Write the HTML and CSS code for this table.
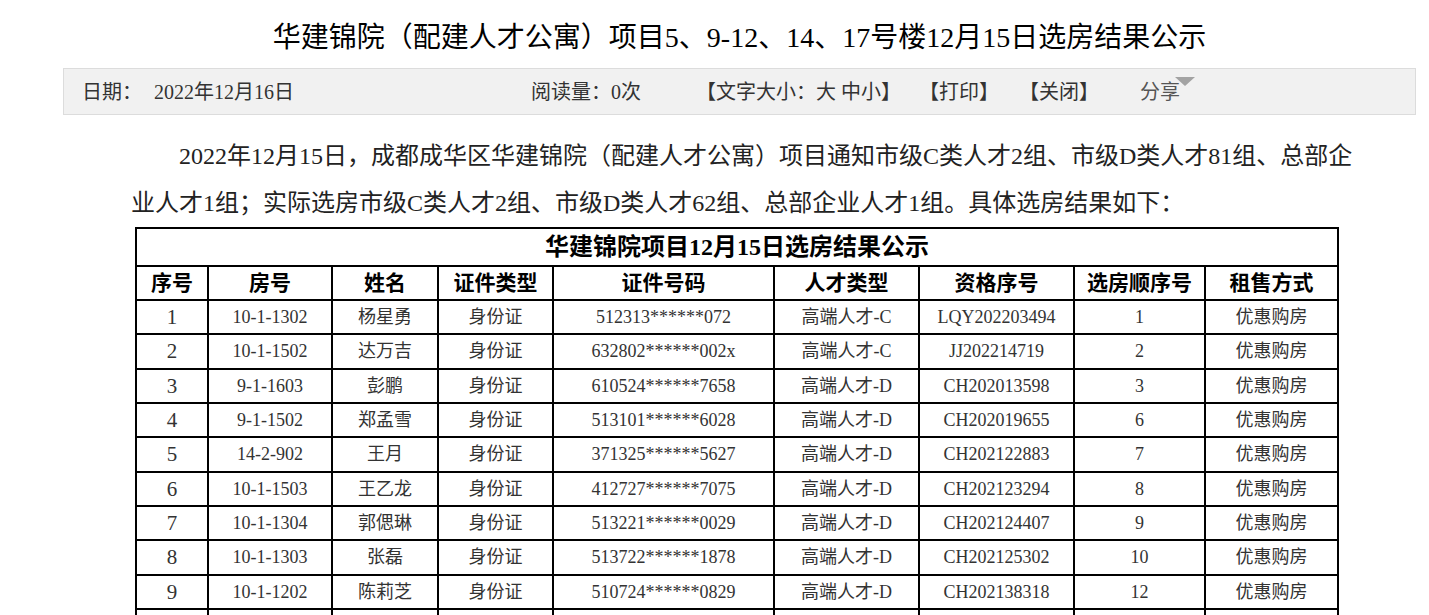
FILE: index.html
```html
<!DOCTYPE html>
<html lang="zh-CN">
<head>
<meta charset="utf-8">
<title>华建锦院（配建人才公寓）项目5、9-12、14、17号楼12月15日选房结果公示</title>
<link rel="stylesheet" href="styles.css">
</head>
<body>
<div class="page">
  <h1 class="title">华建锦院（配建人才公寓）项目5、9-12、14、17号楼12月15日选房结果公示</h1>
  <div class="infobar">
    <span class="lbl-date">日期：</span>
    <span class="val-date">2022年12月16日</span>
    <span class="reads">阅读量：0次</span>
    <span class="fontsize">【文字大小：大 中小】</span>
    <span class="print">【打印】</span>
    <span class="close">【关闭】</span>
    <span class="share">分享<i class="caret"></i></span>
  </div>
  <div class="article">
    <p class="intro">2022年12月15日，成都成华区华建锦院（配建人才公寓）项目通知市级C类人才2组、市级D类人才81组、总部企业人才1组；实际选房市级C类人才2组、市级D类人才62组、总部企业人才1组。具体选房结果如下：</p>
    <table class="result">
      <colgroup>
        <col class="c1"><col class="c2"><col class="c3"><col class="c4"><col class="c5"><col class="c6"><col class="c7"><col class="c8"><col class="c9">
      </colgroup>
      <tr class="caption-row"><td colspan="9">华建锦院项目12月15日选房结果公示</td></tr>
      <tr class="head-row">
        <th>序号</th><th>房号</th><th>姓名</th><th>证件类型</th><th>证件号码</th><th>人才类型</th><th>资格序号</th><th>选房顺序号</th><th>租售方式</th>
      </tr>
      <tr><td class="num">1</td><td>10-1-1302</td><td>杨星勇</td><td>身份证</td><td>512313******072</td><td>高端人才-C</td><td>LQY202203494</td><td>1</td><td>优惠购房</td></tr>
      <tr><td class="num">2</td><td>10-1-1502</td><td>达万吉</td><td>身份证</td><td>632802******002x</td><td>高端人才-C</td><td>JJ202214719</td><td>2</td><td>优惠购房</td></tr>
      <tr><td class="num">3</td><td>9-1-1603</td><td>彭鹏</td><td>身份证</td><td>610524******7658</td><td>高端人才-D</td><td>CH202013598</td><td>3</td><td>优惠购房</td></tr>
      <tr><td class="num">4</td><td>9-1-1502</td><td>郑孟雪</td><td>身份证</td><td>513101******6028</td><td>高端人才-D</td><td>CH202019655</td><td>6</td><td>优惠购房</td></tr>
      <tr><td class="num">5</td><td>14-2-902</td><td>王月</td><td>身份证</td><td>371325******5627</td><td>高端人才-D</td><td>CH202122883</td><td>7</td><td>优惠购房</td></tr>
      <tr><td class="num">6</td><td>10-1-1503</td><td>王乙龙</td><td>身份证</td><td>412727******7075</td><td>高端人才-D</td><td>CH202123294</td><td>8</td><td>优惠购房</td></tr>
      <tr><td class="num">7</td><td>10-1-1304</td><td>郭偲琳</td><td>身份证</td><td>513221******0029</td><td>高端人才-D</td><td>CH202124407</td><td>9</td><td>优惠购房</td></tr>
      <tr><td class="num">8</td><td>10-1-1303</td><td>张磊</td><td>身份证</td><td>513722******1878</td><td>高端人才-D</td><td>CH202125302</td><td>10</td><td>优惠购房</td></tr>
      <tr><td class="num">9</td><td>10-1-1202</td><td>陈莉芝</td><td>身份证</td><td>510724******0829</td><td>高端人才-D</td><td>CH202138318</td><td>12</td><td>优惠购房</td></tr>
      <tr><td></td><td></td><td></td><td></td><td></td><td></td><td></td><td></td><td></td></tr>
    </table>
  </div>
</div>
</body>
</html>
```
FILE: styles.css
```css
html, body {
  margin: 0;
  padding: 0;
  background: #fff;
}
body {
  font-family: "Liberation Serif", "Noto Sans CJK SC", serif;
  color: #333;
  overflow: hidden;
}
.page {
  margin-left: 63px;
  width: 1353px;
}
.title {
  margin: 0;
  padding-top: 18px;
  height: 50px;
  line-height: 40px;
  font-size: 28px;
  font-weight: normal;
  color: #000;
  text-align: center;
  white-space: nowrap;
}
.infobar {
  display: flex;
  align-items: center;
  height: 45px;
  background: #f1f1f1;
  border: 1px solid #dcdcdc;
  padding-left: 18px;
  font-size: 20px;
  line-height: 24px;
  color: #333;
  white-space: nowrap;
}
.lbl-date { width: 72px; }
.val-date { width: 377px; }
.reads { width: 165px; }
.fontsize { width: 223px; }
.print { width: 100px; }
.close { width: 121px; }
.share {
  position: relative;
  color: #555;
}
.caret {
  position: absolute;
  left: 35px;
  top: -3px;
  width: 0;
  height: 0;
  border-left: 10px solid transparent;
  border-right: 10px solid transparent;
  border-top: 9px solid #a3a3a3;
}
.article {
  padding: 0 55px 0 68px;
}
.intro {
  margin: 18px 0 0;
  font-size: 24px;
  line-height: 47px;
  text-indent: 2em;
  color: #222;
}
.result {
  margin-left: 4px;
  width: 1204px;
  border-collapse: collapse;
  table-layout: fixed;
  border: 2px solid #000;
}
.c1 { width: 72px; }
.c2 { width: 124px; }
.c3 { width: 106px; }
.c4 { width: 115px; }
.c5 { width: 221px; }
.c6 { width: 145px; }
.c7 { width: 155px; }
.c8 { width: 131px; }
.c9 { width: 133px; }
.result td, .result th {
  border: 2px solid #000;
  padding: 0;
  text-align: center;
  white-space: nowrap;
}
.result tr { height: 34.33px; }
.result td {
  font-size: 18px;
  line-height: 20px;
  color: #333;
}
.result td.num {
  font-size: 21px;
}
.result tr.caption-row { height: 38px; }
.result tr.head-row { height: 34px; }
.result .caption-row td {
  font-size: 24px;
  font-weight: bold;
  color: #000;
  line-height: 30px;
}
.result .head-row th {
  font-size: 21px;
  font-weight: bold;
  color: #000;
  line-height: 26px;
}
```
